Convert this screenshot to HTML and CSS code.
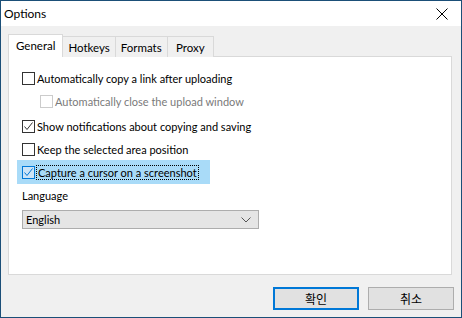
FILE: index.html
```html
<!DOCTYPE html>
<html lang="en">
<head>
    <meta charset="UTF-8">
    <title>Options</title>
    <link rel="stylesheet" href="styles.css">
</head>
<body>
    <div class="window">
        <div class="titlebar">
            <span class="title">Options</span>
            <span class="close">
                <svg width="12" height="12" viewBox="0 0 12 12">
                    <path d="M0.5 0.5 L11.5 11.5 M11.5 0.5 L0.5 11.5" stroke="#000" stroke-width="1" fill="none" />
                </svg>
            </span>
        </div>

        <div class="content">
            <div class="tabs">
                <div class="tab active">General</div>
                <div class="tab">Hotkeys</div>
                <div class="tab">Formats</div>
                <div class="tab">Proxy</div>
            </div>

            <div class="panel">
                <label class="option">
                    <span class="box"></span>
                    <span class="label">Automatically copy a link after uploading</span>
                </label>
                <label class="option sub disabled">
                    <span class="box"></span>
                    <span class="label">Automatically close the upload window</span>
                </label>
                <label class="option">
                    <span class="box checked">
                        <svg viewBox="0 0 11 11"><path d="M1.5 5.5 L4 8.5 L9.5 1.5" /></svg>
                    </span>
                    <span class="label">Show notifications about copying and saving</span>
                </label>
                <label class="option">
                    <span class="box"></span>
                    <span class="label">Keep the selected area position</span>
                </label>
                <label class="option hot">
                    <span class="box checked">
                        <svg viewBox="0 0 11 11"><path d="M1.5 5.5 L4 8.5 L9.5 1.5" /></svg>
                    </span>
                    <span class="label focus">Capture a cursor on a screenshot</span>
                </label>

                <div class="field-label">Language</div>
                <div class="combo">
                    <span>English</span>
                    <svg width="10" height="6" viewBox="0 0 10 6">
                        <path d="M0.5 0.5 L5 5 L9.5 0.5" stroke="#555" stroke-width="1" fill="none" />
                    </svg>
                </div>
            </div>

            <div class="buttons">
                <button class="btn default">확인</button>
                <button class="btn">취소</button>
            </div>
        </div>
    </div>
</body>
</html>
```

FILE: styles.css
```css
* {
    margin: 0;
    padding: 0;
    box-sizing: border-box;
}

body {
    width: 462px;
    height: 318px;
    font-family: Lato, "Noto Sans CJK KR", sans-serif;
    font-size: 11px;
    color: #000;
    background: #fff;
}

.window {
    width: 462px;
    height: 318px;
    border: 1px solid #1b4f78;
    display: flex;
    flex-direction: column;
    background: #f0f0f0;
}

.titlebar {
    height: 25px;
    background: #fff;
    display: flex;
    align-items: center;
    justify-content: space-between;
    padding: 0 0 0 3px;
}

.title {
    font-size: 12px;
}

.close {
    width: 46px;
    height: 25px;
    display: flex;
    align-items: center;
    justify-content: center;
    margin-right: -4px;
}

.content {
    flex: 1;
    padding: 8px 9px 0 7px;
    display: flex;
    flex-direction: column;
}

/* tabs */
.tabs {
    display: flex;
    align-items: flex-end;
    height: 23px;
    position: relative;
    z-index: 1;
    margin-bottom: -1px;
}

.tab {
    height: 21px;
    min-width: 46px;
    padding: 0 5px;
    border: 1px solid #d9d9d9;
    border-bottom: none;
    border-left: none;
    display: flex;
    align-items: center;
    justify-content: center;
    background: #f0f0f0;
    font-size: 11.5px;
}

.tab.active {
    height: 23px;
    background: #fff;
    border-left: 1px solid #d9d9d9;
    padding: 0 7px 1px;
}

/* panel */
.panel {
    height: 219px;
    background: #fff;
    border: 1px solid #d9d9d9;
    padding: 10px 0 0 13px;
}

.option {
    display: flex;
    align-items: center;
    height: 23px;
    gap: 2px;
}

.option.sub {
    padding-left: 18px;
    margin-bottom: 2px;
}

.option.disabled {
    color: #7a7a7a;
}

.box {
    flex: none;
    width: 13px;
    height: 13px;
    border: 1px solid #333;
    background: #fff;
    display: flex;
    align-items: center;
    justify-content: center;
}

.disabled .box {
    border-color: #cccccc;
}

.box svg {
    width: 11px;
    height: 11px;
    fill: none;
    stroke: #333;
    stroke-width: 1;
}

.option.hot {
    margin-left: -5px;
    padding-left: 5px;
    width: 193px;
    height: 24px;
    margin-top: -1px;
    background: #a9dbf8;
}

.hot .box {
    border-color: #0078d7;
    background: #cce4f7;
}

.hot .box svg {
    stroke: #0078d7;
}

.label {
    white-space: nowrap;
}

.label.focus {
    outline: 1px dotted #000;
    padding: 0 1px;
}

.field-label {
    margin-top: 3px;
    height: 17px;
    display: flex;
    align-items: center;
}

.combo {
    width: 237px;
    height: 19px;
    margin-top: 6px;
    background: #e5e5e5;
    border: 1px solid #adadad;
    display: flex;
    align-items: center;
    justify-content: space-between;
    padding: 0 7px 0 3px;
}

/* buttons */
.buttons {
    display: flex;
    justify-content: flex-end;
    gap: 9px;
    margin-top: 12px;
    margin-right: -2px;
}

.btn {
    width: 86px;
    height: 23px;
    font-family: "Noto Sans CJK KR", sans-serif;
    font-size: 12px;
    background: #e1e1e1;
    border: 1px solid #adadad;
    color: #000;
}

.btn.default {
    border: 2px solid #0078d7;
}
```
